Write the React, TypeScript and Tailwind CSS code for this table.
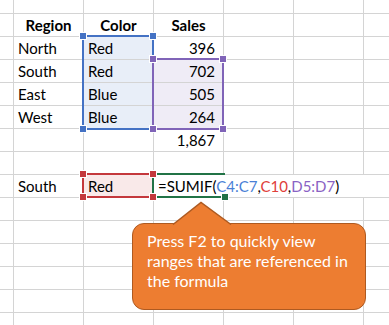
import React from 'react';

type Cell = { text?: React.ReactNode; align?: 'left' | 'center' | 'right'; bold?: boolean; fill?: string };

const BLUE_FILL = 'bg-[#e8eef8]';
const PURPLE_FILL = 'bg-[#efecf6]';

const rows: Cell[][] = [
    [{ text: 'Region', align: 'center', bold: true }, { text: 'Color', align: 'center', bold: true }, { text: 'Sales', align: 'center', bold: true }],
    [{ text: 'North' }, { text: 'Red', fill: BLUE_FILL }, { text: '396', align: 'right' }],
    [{ text: 'South' }, { text: 'Red', fill: BLUE_FILL }, { text: '702', align: 'right', fill: PURPLE_FILL }],
    [{ text: 'East' }, { text: 'Blue', fill: BLUE_FILL }, { text: '505', align: 'right', fill: PURPLE_FILL }],
    [{ text: 'West' }, { text: 'Blue', fill: BLUE_FILL }, { text: '264', align: 'right', fill: PURPLE_FILL }],
    [{}, {}, { text: '1,867', align: 'right' }],
    [{}, {}, {}],
];

function SheetCell({ cell }: { cell: Cell }) {
    const align = cell.align === 'center' ? 'text-center' : cell.align === 'right' ? 'text-right pr-[8px]' : 'text-left pl-[4px]';
    return (
        <div className={`${cell.fill ?? 'bg-white'} ${align} ${cell.bold ? 'font-bold' : ''} leading-[22px] whitespace-nowrap`}>
            {cell.text}
        </div>
    );
}

function Blank({ n }: { n: number }) {
    return (
        <>
            {Array.from({ length: n }).map((_, i) => (
                <div key={i} className="bg-white" />
            ))}
        </>
    );
}

// little square sitting on a corner of a range outline
function Corner({ pos, color }: { pos: string; color: string }) {
    return <div className={`absolute z-10 w-[6px] h-[6px] outline outline-1 outline-white ${pos} ${color}`} />;
}

const TL = '-left-[4px] -top-[4px]';
const TR = '-right-[4px] -top-[4px]';
const BL = '-left-[4px] -bottom-[4px]';
const BR = '-right-[4px] -bottom-[4px]';

const GRID = 'grid grid-cols-[13px_69px_69px_69px_69px_69px_1fr] grid-rows-[13px_repeat(14,22px)] gap-px';

export default function App() {
    return (
        <div className="relative w-[389px] h-[325px] overflow-hidden bg-white text-[15px] text-black font-['Lato',sans-serif]">
            {/* cells */}
            <div className={`${GRID} bg-[#d4d4d4]`}>
                <Blank n={7} />
                {rows.map((r, ri) => (
                    <React.Fragment key={ri}>
                        <div className="bg-white" />
                        {r.map((c, ci) => (
                            <SheetCell key={ci} cell={c} />
                        ))}
                        <Blank n={3} />
                    </React.Fragment>
                ))}
                <div className="bg-white" />
                <div className="bg-white pl-[4px] leading-[22px]">South</div>
                <div className="bg-[#f9e9e9] pl-[4px] leading-[22px]">Red</div>
                <div className="col-span-4 bg-white pl-[4px] leading-[22px] whitespace-nowrap">
                    =SUMIF(<span className="text-[#4a7fd6]">C4:C7</span>,<span className="text-[#e0403a]">C10</span>,<span className="text-[#8a62c4]">D5:D7</span>)
                </div>
                <Blank n={42} />
            </div>

            {/* formula reference outlines, laid on the same grid */}
            <div className={`${GRID} absolute inset-0 pointer-events-none`}>
                <div className="relative col-start-3 row-start-3 row-span-4 -ml-[2px] -mr-px -mt-[2px] -mb-[2px] border-2 border-[#4472c4]">
                    <Corner pos={TL} color="bg-[#4472c4]" />
                    <Corner pos={TR} color="bg-[#4472c4]" />
                    <Corner pos={BL} color="bg-[#4472c4]" />
                </div>
                <div className="relative col-start-4 row-start-4 row-span-3 -ml-[2px] -mr-px -mt-[2px] -mb-[2px] border-2 border-[#8064b8]">
                    <Corner pos={TL} color="bg-[#8064b8]" />
                    <Corner pos={TR} color="bg-[#8064b8]" />
                    <Corner pos={BL} color="bg-[#8064b8]" />
                    <Corner pos={BR} color="bg-[#8064b8]" />
                </div>
                <div className="relative col-start-3 row-start-9 -ml-[2px] -mr-px -mt-[2px] -mb-px border-2 border-[#c4383c]">
                    <Corner pos={TL} color="bg-[#c4383c]" />
                    <Corner pos={TR} color="bg-[#c4383c]" />
                    <Corner pos={BL} color="bg-[#c4383c]" />
                    <Corner pos={BR} color="bg-[#c4383c]" />
                </div>
                {/* active cell being edited */}
                <div className="relative col-start-4 row-start-9 -ml-[2px] -mr-[2px] -mt-[2px] -mb-px border-t-2 border-l-2 border-b-2 border-[#217346]">
                    <Corner pos="-right-[3px] -bottom-[4px]" color="bg-[#217346]" />
                </div>
            </div>

            {/* callout */}
            <div className="absolute left-[132px] top-[223px] w-[234px] h-[87px] rounded-[12px] border-[1.5px] border-[#ae5a21] bg-[#ed7d31] pl-[14px] pt-[7px] text-white text-[16px] leading-[20px]">
                <svg className="absolute left-[38px] -top-[23px]" width="62" height="26" viewBox="0 0 62 26">
                    <path d="M2 25 L2 23.5 L30 1.5 L60 23.5 L60 25 Z" fill="#ed7d31" />
                    <path d="M2 23.5 L30 1.5 L60 23.5" fill="none" stroke="#ae5a21" strokeWidth="1.5" />
                </svg>
                <p className="relative w-[206px]">Press F2 to quickly view ranges that are referenced in the formula</p>
            </div>
        </div>
    );
}
